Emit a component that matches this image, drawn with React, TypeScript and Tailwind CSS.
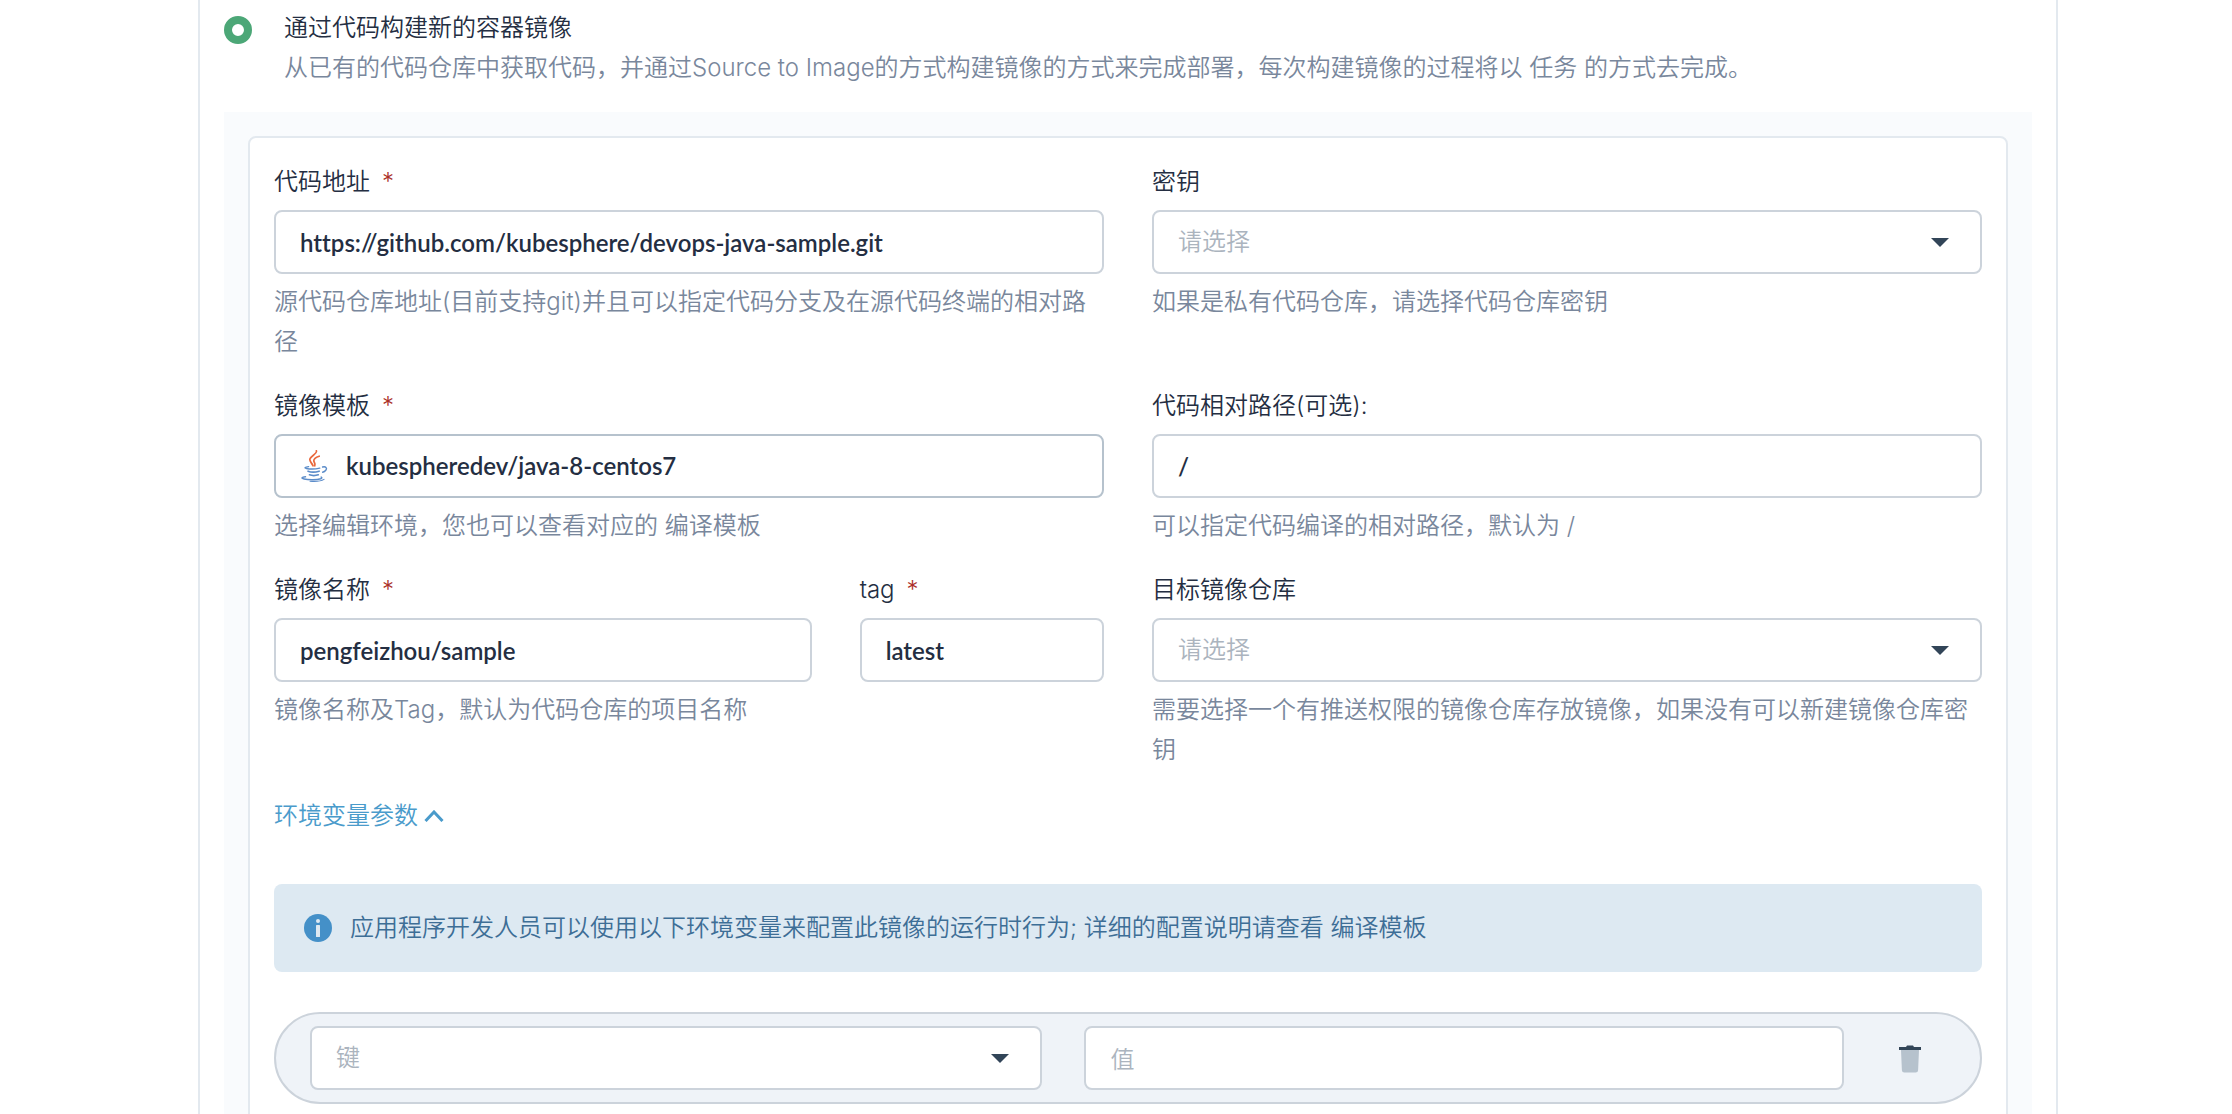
import { useId, useState } from "react";
import type { ReactNode } from "react";
import clsx from "clsx";

const CONTROL =
  "block h-16 w-full rounded-lg border-2 bg-white pl-6 text-2xl outline-none placeholder:font-[350] placeholder:text-[#abb4be]";

const VALUE_FONT =
  "font-[Lato,'Noto_Sans_CJK_SC',sans-serif] font-semibold [font-variant-ligatures:none]";

function JavaIcon({ className }: { className?: string }) {
  return (
    <svg viewBox="0 0 32 32" className={className} fill="none" strokeLinecap="round" aria-hidden="true">
      <g stroke="#e9683c" strokeWidth="1.7">
        <path d="M16.4 0.8c1.4 3.2-6.6 5.2-6.6 8.8 0 2.4 2.4 3.800 3.200 6.200" />
        <path d="M19.200 6.200c-3 1-5.400 2.600-5.400 4.600 0 1.800 2 2.400 0.900 5" />
      </g>
      <g stroke="#5b8cc9">
        <path strokeWidth="1.4" d="M8.600 16.600c-3.600 0.600-4.600 1.400-2.200 1.900 3.800 0.700 9.600 0.500 13.400-0.400" />
        <path strokeWidth="1.4" d="M22.600 17c3-1 5 1 3.200 3.200-0.800 1-2 1.700-3.200 2" />
        <path strokeWidth="1.7" d="M8.100 21.200c2.600 1 8 0.900 11 0" />
        <path strokeWidth="1.7" d="M9.500 24.800c2.400 0.900 6.400 0.800 8.800 0" />
        <path strokeWidth="1.5" d="M5.500 26.800c-3.800 0.400-4.600 1.500-1.400 2.200 4.800 1 13 0.800 16.600-0.300 1.400-0.500 1.400-1.200 0.500-1.600" />
        <path strokeWidth="1.100" d="M10 31.200c5 0.400 11 0 14-1.800" />
      </g>
    </svg>
  );
}

function InfoIcon({ className }: { className?: string }) {
  return (
    <svg viewBox="0 0 28 28" className={className} aria-hidden="true">
      <circle cx="14" cy="14" r="14" fill="#4490c8" />
      <circle cx="14" cy="7" r="2" fill="#dde9f2" />
      <rect x="12" y="11" width="4" height="12" rx="0.5" fill="#dde9f2" />
    </svg>
  );
}

function TrashIcon({ className }: { className?: string }) {
  return (
    <svg viewBox="0 -2 22 30" className={className} aria-hidden="true">
      <path d="M2 5h18l-0.900 20.200a2.400 2.400 0 0 1-2.400 2.300H5.300a2.400 2.400 0 0 1-2.400-2.300z" fill="#b6c2cd" />
      <path d="M0 2h7l1-1.500h6L15 2h7v3H0z" fill="#324558" />
    </svg>
  );
}

type FieldProps = {
  label: string;
  required?: boolean;
  desc?: ReactNode;
  children: (id: string) => ReactNode;
};

function Field({ label, required, desc, children }: FieldProps) {
  const id = useId();
  return (
    <div>
      <label htmlFor={id} className="mb-2 block">
        {label}
        {required && <span className="ml-3 text-[#ab2f29]">*</span>}
      </label>
      {children(id)}
      {desc && <p className="mt-2 text-[#79879c]">{desc}</p>}
    </div>
  );
}

type TextBoxProps = { id?: string; value?: string; placeholder?: string; label?: string };

function TextBox({ id, value, placeholder, label }: TextBoxProps) {
  return (
    <input
      id={id}
      type="text"
      defaultValue={value}
      placeholder={placeholder}
      aria-label={label}
      className={clsx(CONTROL, VALUE_FONT, "border-[#ccd3db] pr-6")}
    />
  );
}

function Select({ id, placeholder, label }: TextBoxProps) {
  return (
    <div className="relative">
      <select
        id={id}
        aria-label={label}
        defaultValue=""
        className={clsx(CONTROL, "appearance-none border-[#ccd3db] pr-16 font-[350] text-[#abb4be]")}
      >
        <option value="">{placeholder}</option>
      </select>
      <svg
        viewBox="0 0 18 9"
        className="pointer-events-none absolute top-7 right-[33px] h-[9px] w-[18px]"
        aria-hidden="true"
      >
        <path d="M0 0h18L9 9z" fill="#324558" />
      </svg>
    </div>
  );
}

export default function App() {
  const [open, setOpen] = useState(true);

  return (
    <div className="h-screen overflow-hidden bg-white pr-[174px] pl-[198px] font-[Inter,'Noto_Sans_CJK_SC',sans-serif] text-2xl leading-10 font-[350] text-[#242e42]">
      <main className="min-h-full border-x-2 border-[#e3e9ef] px-6 pt-2">
        <div className="flex items-start gap-8 pb-6">
          <input
            id="build-from-source"
            type="radio"
            name="image-source"
            defaultChecked
            className="mt-2 size-7 shrink-0 appearance-none rounded-full border-8 border-[#4ca777] bg-white"
          />
          <div>
            <label htmlFor="build-from-source" className="block">
              通过代码构建新的容器镜像
            </label>
            <p className="text-[#79879c]">
              从已有的代码仓库中获取代码，并通过Source to Image的方式构建镜像的方式来完成部署，每次构建镜像的过程将以 任务 的方式去完成。
            </p>
          </div>
        </div>

        <div className="bg-[#f9fbfd] p-6">
          <form className="rounded-lg border-2 border-[#e3e9ef] bg-white p-6">
            <div className="grid grid-cols-2 gap-x-12 gap-y-6">
              <Field
                label="代码地址"
                required
                desc="源代码仓库地址(目前支持git)并且可以指定代码分支及在源代码终端的相对路径"
              >
                {(id) => <TextBox id={id} value="https://github.com/kubesphere/devops-java-sample.git" />}
              </Field>
              <Field label="密钥" desc="如果是私有代码仓库，请选择代码仓库密钥">
                {(id) => <Select id={id} placeholder="请选择" />}
              </Field>

              <Field
                label="镜像模板"
                required
                desc={
                  <>
                    选择编辑环境，您也可以查看对应的 <a href="#templates">编译模板</a>
                  </>
                }
              >
                {(id) => (
                  <button
                    id={id}
                    type="button"
                    className={clsx(
                      VALUE_FONT,
                      "flex h-16 w-full items-center gap-3.5 rounded-lg border-2 border-[#b6c2cd] bg-white px-6 text-left",
                    )}
                  >
                    <JavaIcon className="size-8" />
                    kubespheredev/java-8-centos7
                  </button>
                )}
              </Field>
              <Field label="代码相对路径(可选):" desc="可以指定代码编译的相对路径，默认为 /">
                {(id) => <TextBox id={id} value="/" />}
              </Field>

              <div className="grid grid-cols-[11fr_5fr] content-start gap-x-12">
                <Field label="镜像名称" required desc="镜像名称及Tag，默认为代码仓库的项目名称">
                  {(id) => <TextBox id={id} value="pengfeizhou/sample" />}
                </Field>
                <Field label="tag" required>
                  {(id) => <TextBox id={id} value="latest" />}
                </Field>
              </div>
              <Field
                label="目标镜像仓库"
                desc="需要选择一个有推送权限的镜像仓库存放镜像，如果没有可以新建镜像仓库密钥"
              >
                {(id) => <Select id={id} placeholder="请选择" />}
              </Field>
            </div>

            <button
              type="button"
              aria-expanded={open}
              onClick={() => setOpen(!open)}
              className="mt-6 flex h-11 items-center gap-1.5 text-[#4a9bcb]"
            >
              环境变量参数
              <svg viewBox="0 0 20 12" className={clsx("h-3 w-5", !open && "rotate-180")} aria-hidden="true">
                <path d="M1.500 11L10 2l8.500 9" fill="none" stroke="currentColor" strokeWidth="3" />
              </svg>
            </button>

            {open && (
              <>
                <div className="mt-[46px] flex items-center gap-[18px] rounded-lg bg-[#dde9f2] px-[30px] py-6 text-[#3d6e96]">
                  <InfoIcon className="size-7 shrink-0" />
                  <p>
                    应用程序开发人员可以使用以下环境变量来配置此镜像的运行时行为; 详细的配置说明请查看{" "}
                    <a href="#templates">编译模板</a>
                  </p>
                </div>

                <div className="mt-10 flex items-center rounded-full border-2 border-[#ccd3db] bg-[#eff3f8] py-3 pr-[54px] pl-[34px]">
                  <div className="grid flex-1 grid-cols-[27fr_28fr] gap-[42px]">
                    <Select label="键" placeholder="键" />
                    <TextBox label="值" placeholder="值" />
                  </div>
                  <button type="button" aria-label="删除" className="ml-[50px] flex h-10 w-8 items-center justify-center">
                    <TrashIcon className="h-[30px] w-[22px]" />
                  </button>
                </div>
              </>
            )}
          </form>
        </div>
      </main>
    </div>
  );
}
